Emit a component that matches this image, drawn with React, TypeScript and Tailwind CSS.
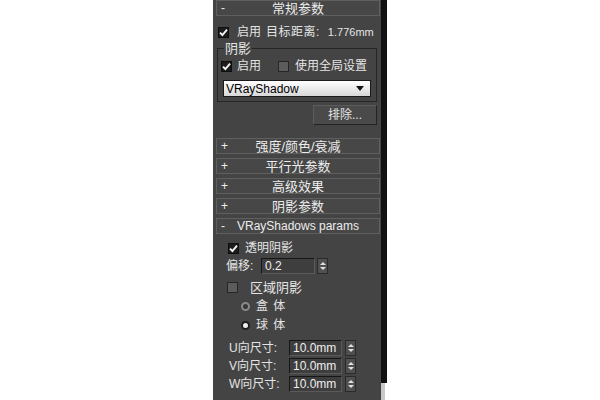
import React from 'react'

const font = "font-['Liberation_Sans','Noto_Sans_CJK_SC',sans-serif]"

function Check({ on }: { on?: boolean }) {
  if (on) {
    return (
      <span className="w-[11px] h-[11px] bg-[#1c1c1c] border border-[#0e0e0e] flex items-center justify-center shrink-0">
        <svg width="9" height="9" viewBox="0 0 9 9">
          <path d="M1 4.6 L3.4 7 L8 1.6" stroke="#f4f4f4" strokeWidth="1.9" fill="none" />
        </svg>
      </span>
    )
  }
  return <span className="block w-[11px] h-[11px] bg-[#5c5c5c] border border-[#262626] shrink-0" />
}

function Radio({ on }: { on?: boolean }) {
  return (
    <span
      className={
        on
          ? 'block w-[9px] h-[9px] rounded-full bg-[#f0f0f0] border-2 border-[#1e1e1e] shrink-0'
          : 'block w-[9px] h-[9px] rounded-full bg-[#383838] border-2 border-[#8a8a8a] shrink-0'
      }
    />
  )
}

function Rollout({ sign, title, small }: { sign: string; title: string; small?: boolean }) {
  return (
    <div className="h-[16px] border border-[#5f5f5f] bg-[#474747] flex items-center text-[#ececec]">
      <span className="w-[14px] pl-[4px] text-[12px] leading-none">{sign}</span>
      <span className={(small ? 'text-[12px]' : 'text-[13px]') + ' flex-1 text-center pr-[14px] leading-none'}>{title}</span>
    </div>
  )
}

function Spin() {
  return (
    <span className="w-[11px] h-[16px] bg-[#505050] border border-[#2a2a2a] flex flex-col items-center justify-center gap-[2px] shrink-0">
      <svg width="6" height="3" viewBox="0 0 6 3"><path d="M0 3 L3 0 L6 3Z" fill="#e0e0e0" /></svg>
      <svg width="6" height="3" viewBox="0 0 6 3"><path d="M0 0 L3 3 L6 0Z" fill="#e0e0e0" /></svg>
    </span>
  )
}

function Field({ value, w }: { value: string; w: string }) {
  return (
    <span className={w + ' block h-[16px] bg-[#3e3e3e] border border-t-[#161616] border-l-[#161616] border-b-[#5a5a5a] border-r-[#5a5a5a] text-[12px] leading-[14px] pl-[3px] text-[#eeeeee]'}>
      {value}
    </span>
  )
}

function SizeRow({ label, mt }: { label: string; mt: string }) {
  return (
    <div className={mt + ' flex items-center h-[16px]'}>
      <span className="ml-[13px] w-[60px] text-[12px] leading-none text-[#e4e4e4]">{label}</span>
      <Field value="10.0mm" w="w-[53px]" />
      <span className="ml-[3px]"><Spin /></span>
    </div>
  )
}

const App: React.FC = () => {
  return (
    <div className={font + ' w-[600px] h-[400px] bg-white flex overflow-hidden'}>
      <div className="w-[213px]" />
      <div className="w-[168px] h-[400px] bg-[#444444] flex flex-col pl-[3px] pr-[1px] text-[#e4e4e4]">
        <Rollout sign="-" title="常规参数" />

        <div className="mt-[10px] h-[12px] flex items-center">
          <span className="ml-[2px]"><Check on /></span>
          <span className="ml-[8px] text-[12px] leading-none">启用</span>
          <span className="ml-[5px] text-[12px] leading-none tracking-[0.5px]">目标距离:</span>
          <span className="ml-[8px] text-[11px] leading-none">1.776mm</span>
        </div>

        <fieldset className="mt-[3px] ml-[1px] mr-[3px] border border-[#262626] px-0 pb-[4px]">
          <legend className="ml-[6px] px-[1px] text-[13px] leading-[15px]">阴影</legend>
          <div className="mt-[4px] h-[12px] flex items-center">
            <span className="ml-[3px]"><Check on /></span>
            <span className="ml-[5px] text-[12px] leading-none">启用</span>
            <span className="ml-[17px]"><Check /></span>
            <span className="ml-[6px] text-[12px] leading-none">使用全局设置</span>
          </div>
          <div className="mt-[8px] mx-[5px] h-[17px] bg-gradient-to-b from-white to-[#d8d8d8] border border-[#1a1a1a] flex items-center justify-between px-[2px]">
            <span className="text-[12px] leading-none text-black">VRayShadow</span>
            <svg width="8" height="5" viewBox="0 0 8 5" className="mr-[4px]"><path d="M0 0 L8 0 L4 5Z" fill="#111" /></svg>
          </div>
        </fieldset>

        <div className="mt-[3px] flex justify-end pr-[3px]">
          <span className="w-[64px] h-[20px] bg-[#4a4a4a] border border-t-[#5c5c5c] border-l-[#5c5c5c] border-b-[#222] border-r-[#222] flex items-center justify-center text-[12px] leading-none">
            排除...
          </span>
        </div>

        <div className="mt-[13px] flex flex-col gap-[4px]">
          <Rollout sign="+" title="强度/颜色/衰减" />
          <Rollout sign="+" title="平行光参数" />
          <Rollout sign="+" title="高级效果" />
          <Rollout sign="+" title="阴影参数" />
          <Rollout sign="-" title="VRayShadows params" small />
        </div>

        <div className="mt-[7px] h-[14px] flex items-center">
          <span className="ml-[12px]"><Check on /></span>
          <span className="ml-[6px] text-[12px] leading-none">透明阴影</span>
        </div>

        <div className="mt-[2px] h-[17px] flex items-center">
          <span className="ml-[10px] w-[35px] text-[12px] leading-none">偏移:</span>
          <Field value="0.2" w="w-[54px]" />
          <span className="ml-[2px]"><Spin /></span>
        </div>

        <div className="mt-[6px] h-[14px] flex items-center">
          <span className="ml-[11px]"><Check /></span>
          <span className="ml-[12px] text-[13px] leading-none">区域阴影</span>
        </div>

        <div className="mt-[5px] h-[14px] flex items-center">
          <span className="ml-[25px]"><Radio /></span>
          <span className="ml-[6px] text-[12px] leading-none tracking-[1px]">盒 体</span>
        </div>

        <div className="mt-[5px] h-[14px] flex items-center">
          <span className="ml-[25px]"><Radio on /></span>
          <span className="ml-[6px] text-[12px] leading-none tracking-[1px]">球 体</span>
        </div>

        <SizeRow label="U向尺寸:" mt="mt-[8px]" />
        <SizeRow label="V向尺寸:" mt="mt-[2px]" />
        <SizeRow label="W向尺寸:" mt="mt-[2px]" />
      </div>
      <div className="flex flex-col">
        <div className="w-[6px] h-[383px] bg-[#111111]" />
        <div className="w-[4px] h-[17px] bg-[#c8c8c8]" />
      </div>
    </div>
  )
}

export default App
